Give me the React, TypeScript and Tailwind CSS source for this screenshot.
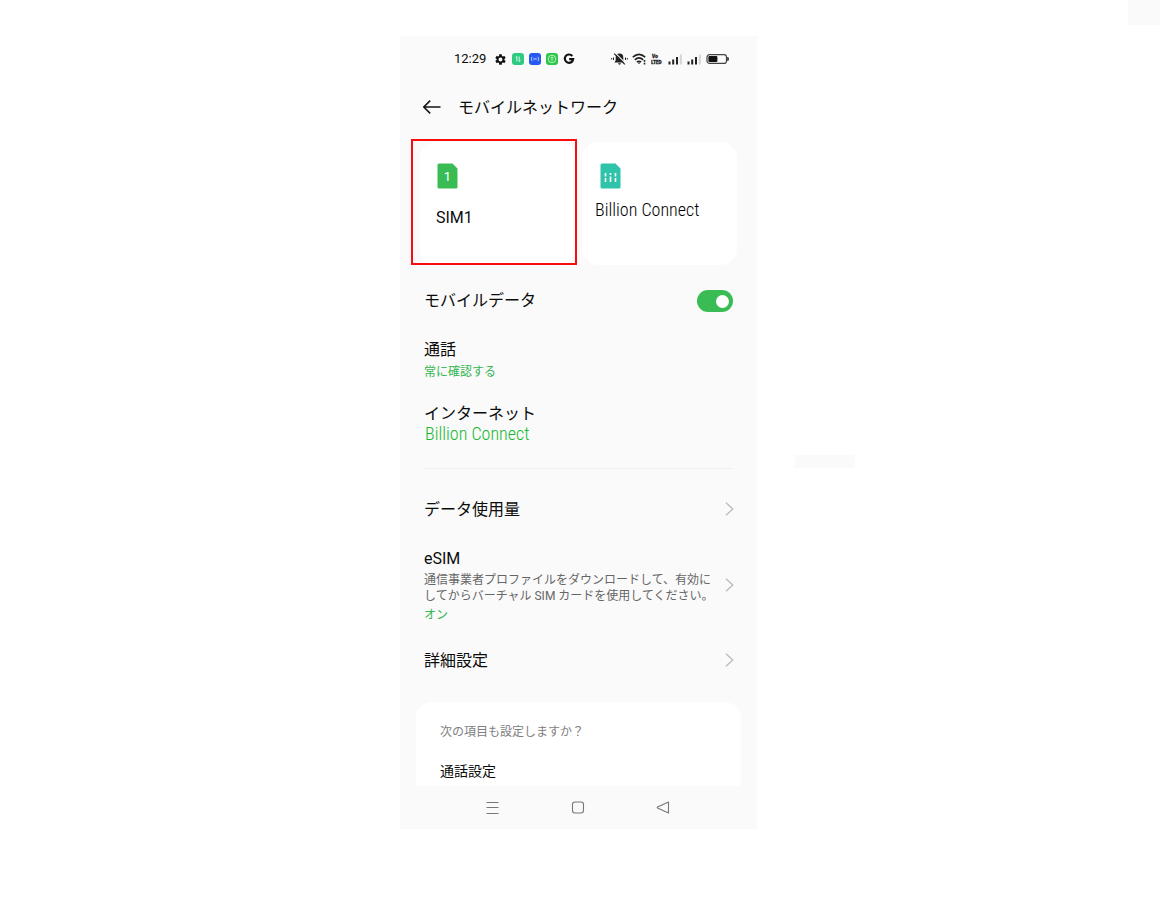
import type { ReactNode } from "react";
import { MdSettings } from "react-icons/md";

export default function App() {
  return (
    <div className="relative flex min-h-screen items-start justify-center bg-white pt-9 pr-[3px] font-[Roboto,'Noto_Sans_CJK_JP',sans-serif] text-[#0c0c0c]">
      <div className="absolute top-0 right-0 h-[25px] w-8 bg-[#fafafa]" />

      <div className="relative w-full max-w-[357px] bg-[#fafafa]">
        <div className="absolute top-[419px] left-full ml-[38px] h-[13px] w-[60px] bg-[#fafafa]" />

        <StatusBar />

        <header className="flex h-[50px] items-center px-[22px]">
          <button type="button" aria-label="戻る" className="mr-4">
            <svg width="20" height="16" viewBox="0 0 20 16" fill="none" stroke="#151515" strokeWidth="1.6">
              <path d="M8.2 1.6 1.8 8l6.4 6.4M1.8 8H18.5" />
            </svg>
          </button>
          <h1 className="pt-[2px] text-base leading-6">モバイルネットワーク</h1>
        </header>

        <main>
          <div className="mt-[10px] grid grid-cols-2 gap-[7px] px-5">
            <SimCard name="SIM1" selected />
            <SimCard name="Billion Connect" />
          </div>

          <div className="px-6">
            <div className="mt-3 flex h-12 items-center justify-between">
              <label htmlFor="mobile-data" className="text-base leading-6">
                モバイルデータ
              </label>
              <input
                id="mobile-data"
                type="checkbox"
                role="switch"
                defaultChecked
                className="flex h-[22px] w-9 cursor-pointer appearance-none items-center rounded-full bg-gray-300 px-1 before:h-[13px] before:w-[13px] before:rounded-full before:bg-white checked:justify-end checked:bg-[#3abc55]"
              />
            </div>

            <button type="button" className="mt-[13px] block w-full text-left">
              <span className="block text-base leading-6">通話</span>
              <span className="block text-xs leading-5 text-[#35b550]">常に確認する</span>
            </button>

            <button type="button" className="mt-5 block w-full text-left">
              <span className="block text-base leading-6">インターネット</span>
              <span className="block pl-px font-['Roboto_Condensed',sans-serif] text-lg leading-4 font-light text-[#14b82f]">
                Billion Connect
              </span>
            </button>

            <hr className="mt-[26px] border-[#eeeeee]" />

            <LinkRow title="データ使用量" className="mt-[29px]" />
            <LinkRow title="eSIM" className="mt-[25px]">
              <span className="mt-px block text-xs leading-4 text-[#666666]">
                通信事業者プロファイルをダウンロードして、有効に
                <br />
                してからバーチャル SIM カードを使用してください。
              </span>
              <span className="mt-px block text-xs leading-5 text-[#35b550]">オン</span>
            </LinkRow>
            <LinkRow title="詳細設定" className="mt-6" />
          </div>

          <section className="mx-4 mt-[29px] rounded-t-2xl bg-white px-6 pt-5 pb-[5px]">
            <h2 className="text-xs leading-5 text-[#808080]">次の項目も設定しますか？</h2>
            <a href="#call-settings" className="mt-[19px] block text-sm leading-5">
              通話設定
            </a>
          </section>
        </main>

        <NavBar />
      </div>
    </div>
  );
}

function SimCard({ name, selected = false }: { name: string; selected?: boolean }) {
  return (
    <button type="button" aria-pressed={selected} className="relative flex h-[123px] flex-col items-start rounded-2xl bg-white pt-[21px] pl-[13px]">
      {selected && <span className="absolute -top-[3px] -right-[2px] bottom-0 -left-[9px] border-2 border-[#f80c0c]" />}
      {selected ? (
        <>
          <svg width="21" height="26" viewBox="0 0 21 26" className="ml-1">
            <path d="M2 .5h13.5l5 5V24a1.5 1.5 0 0 1-1.5 1.5H2A1.5 1.5 0 0 1 .5 24V2A1.5 1.5 0 0 1 2 .5Z" fill="#3abc55" />
            <text x="10.5" y="18" textAnchor="middle" fontSize="13" fill="#fff">1</text>
          </svg>
          <span className="mt-[17px] ml-[3px] text-base leading-6">{name}</span>
        </>
      ) : (
        <>
          <svg width="21" height="26" viewBox="0 0 21 26" className="ml-[5px]">
            <path d="M2 .5h13.5l5 5V24a1.5 1.5 0 0 1-1.5 1.5H2A1.5 1.5 0 0 1 .5 24V2A1.5 1.5 0 0 1 2 .5Z" fill="#2fc4a9" />
            <path d="M5.5 10v3.500M5.500 15v4M10.500 10v2M10.500 13.500v5.500M15.500 10v3.500M15.500 15v4" stroke="#fff" strokeWidth="1.6" />
          </svg>
          <span className="mt-[9px] font-['Roboto_Condensed',sans-serif] text-lg leading-6 font-light text-black">{name}</span>
        </>
      )}
    </button>
  );
}

function LinkRow({ title, className, children }: { title: string; className: string; children?: ReactNode }) {
  return (
    <a href="#detail" className={`-mr-px flex items-center justify-between ${className}`}>
      <span className="whitespace-nowrap">
        <span className="block text-base leading-6">{title}</span>
        {children}
      </span>
      <svg width="9" height="16" viewBox="0 0 9 16" fill="none" stroke="#b8b8b8" strokeWidth="1.2" className="shrink-0">
        <path d="M1 .8 7.8 7 1 13.2" />
      </svg>
    </a>
  );
}

function StatusBar() {
  return (
    <div className="flex h-[46px] items-center justify-between pr-7 pl-[54px]">
      <div className="flex items-center gap-[5px]">
        <span className="mr-[3px] text-[13px] leading-4">12:29</span>
        <MdSettings size={13} color="#111" />
        <svg width="12" height="12" viewBox="0 0 12 12" fill="none" stroke="#fff" strokeWidth=".8">
          <rect width="12" height="12" rx="3" fill="#2ccb80" stroke="none" />
          <path d="M3.6 4.6 4.9 3.5V8.5M7.2 3.5V8.5L8.5 7.4" />
        </svg>
        <svg width="12" height="12" viewBox="0 0 12 12" fill="none" stroke="#cfdcff" strokeWidth=".8">
          <rect width="12" height="12" rx="3" fill="#2559f0" stroke="none" />
          <path d="M3 3.8Q1.4 6 3 8.2M9 3.8Q10.6 6 9 8.2M4.3 7.2 5.5 6 6.5 6 7.7 4.8M4.3 4.8 5.5 6M6.5 6 7.7 7.2" />
        </svg>
        <svg width="12" height="12" viewBox="0 0 12 12" fill="none" stroke="#d6ffdc" strokeWidth=".8">
          <rect width="12" height="12" rx="3" fill="#2fc648" stroke="none" />
          <circle cx="6" cy="6" r="3.8" />
          <path d="M6 8.5V4M4.3 5.4 6 3.9 7.7 5.4" />
        </svg>
        <svg width="12" height="12" viewBox="0 0 12 12" fill="none" stroke="#111" strokeWidth="2.1">
          <path d="M9.3 3A4.2 4.2 0 1 0 10.2 6.1H6.2" />
        </svg>
      </div>

      <div className="flex items-center gap-1">
        <svg width="17" height="14" viewBox="0 0 17 14" fill="#222">
          <path d="M8.5 1.5C6 1.5 4.7 3.2 4.7 5.4V8.3L3.5 10.5H13.5L12.3 8.3V5.4C12.3 3.2 11 1.5 8.5 1.5ZM7 11.3H10Q9.6 12.7 8.5 12.7T7 11.3Z" />
          <path d="M4.4 1.1 15 11.7" stroke="#fafafa" strokeWidth="1.1" />
          <path d="M3.2 1.7 13.8 12.3" stroke="#222" strokeWidth="1.2" />
          <path d="M2.5 5.5v2.5M.7 6v1.5M14.5 5.5v2.5M16.3 6v1.5" stroke="#222" strokeWidth="1" />
        </svg>
        <svg width="15" height="12" viewBox="0 0 15 12" fill="none" stroke="#222" strokeWidth="1.6">
          <path d="M.8 4.2Q7 -1.6 13.2 4.2M2.8 6.8Q7 3 11.2 6.8M4.9 9Q7 7.4 9.1 9" />
          <path d="M5.6 9.5h2.8L7 11.2Z" fill="#222" stroke="none" />
          <path d="M12.5 7v1.8M12.5 9.8v1.8" />
        </svg>
        <svg width="13" height="12" viewBox="0 0 13 12" fill="#222" stroke="#222" strokeWidth=".3" fontFamily="'Open Sans Condensed', sans-serif" fontSize="6" fontWeight="700">
          <text x="1" y="5">Vo</text>
          <text x="0" y="11">LTED</text>
        </svg>
        <SignalBars />
        <SignalBars />
        <svg width="23" height="10" viewBox="0 0 23 10">
          <rect x="1" y=".6" width="19.5" height="8.8" rx="2.5" fill="none" stroke="#444" strokeWidth="1.2" />
          <rect x="2.4" y="2" width="9" height="6" rx="1" fill="#111" />
          <path d="M21.8 3.2Q23 5 21.8 6.8Z" fill="#333" stroke="#333" />
        </svg>
      </div>
    </div>
  );
}

function SignalBars() {
  return (
    <svg width="15" height="11" viewBox="0 0 15 11" fill="#222">
      <path d="M.5 7.5H2.5V10.5H.5ZM4.2 5.5H6.2V10.5H4.2ZM8 3H10V10.5H8Z" />
      <path d="M11.8 .5H13.8V10.5H11.8Z" fill="#d5d5d5" />
    </svg>
  );
}

function NavBar() {
  return (
    <nav className="flex h-[43px] items-center justify-center gap-[71px] pr-[1px]">
      <button type="button" aria-label="最近使用したアプリ">
        <svg width="14" height="14" viewBox="0 0 14 14" fill="none" stroke="#777" strokeWidth="1.1">
          <path d="M.5 1.5H12.5M.5 6.5H12.5M.5 12.5H12.5" />
        </svg>
      </button>
      <button type="button" aria-label="ホーム">
        <svg width="14" height="14" viewBox="0 0 14 14" fill="none" stroke="#777" strokeWidth="1.1">
          <rect x="1.5" y="1" width="11" height="11" rx="2.5" />
        </svg>
      </button>
      <button type="button" aria-label="戻る">
        <svg width="14" height="14" viewBox="0 0 14 14" fill="none" stroke="#777" strokeWidth="1.1" strokeLinejoin="round">
          <path d="M12.5 1V12L1.5 7Q1 6.5 1.5 6Z" />
        </svg>
      </button>
    </nav>
  );
}
